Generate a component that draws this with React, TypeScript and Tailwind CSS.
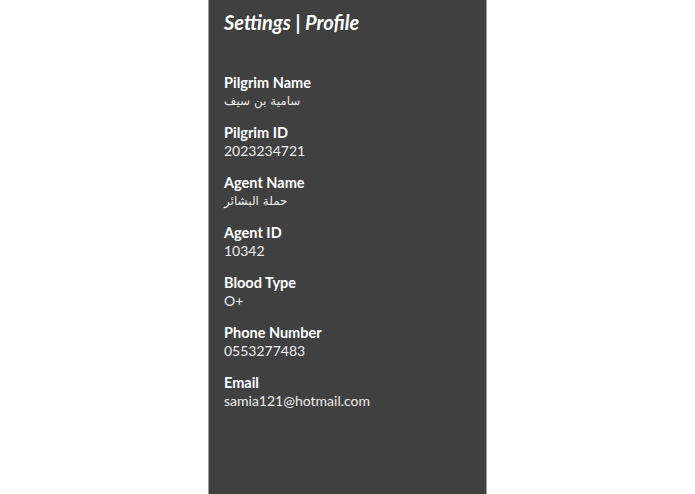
import React from 'react';

interface Field {
  label: string;
  value: string;
  rtl?: boolean;
}

const fields: Field[] = [
  { label: 'Pilgrim Name', value: 'سامية بن سيف', rtl: true },
  { label: 'Pilgrim ID', value: '2023234721' },
  { label: 'Agent Name', value: 'حملة البشائر', rtl: true },
  { label: 'Agent ID', value: '10342' },
  { label: 'Blood Type', value: 'O+' },
  { label: 'Phone Number', value: '0553277483' },
  { label: 'Email', value: 'samia121@hotmail.com' },
];

const App: React.FC = () => {
  return (
    <div className="w-full h-screen bg-white flex justify-center font-['Lato','Noto_Sans',sans-serif]">
      <div className="w-[278px] h-full bg-[#404040] px-4 pt-[10px] flex flex-col -translate-x-[0.5px]">
        {/* title */}
        <h1 className="text-[20px] leading-6 font-bold italic text-white">Settings | Profile</h1>

        {/* profile fields */}
        <div className="mt-[40px] flex flex-col gap-[14px]">
          {fields.map((f) => (
            <div key={f.label} className="flex flex-col">
              <span className="text-[14.5px] leading-[18px] font-bold text-white">{f.label}</span>
              {f.rtl ? (
                <span
                  dir="rtl"
                  className="self-start text-[12px] leading-[17px] pt-[1px] text-[#ececec] font-['DejaVu_Sans','Noto_Sans',sans-serif]"
                >
                  {f.value}
                </span>
              ) : (
                <span className="text-[14px] leading-[18px] text-[#ececec]">{f.value}</span>
              )}
            </div>
          ))}
        </div>
      </div>
    </div>
  );
};

export default App;
